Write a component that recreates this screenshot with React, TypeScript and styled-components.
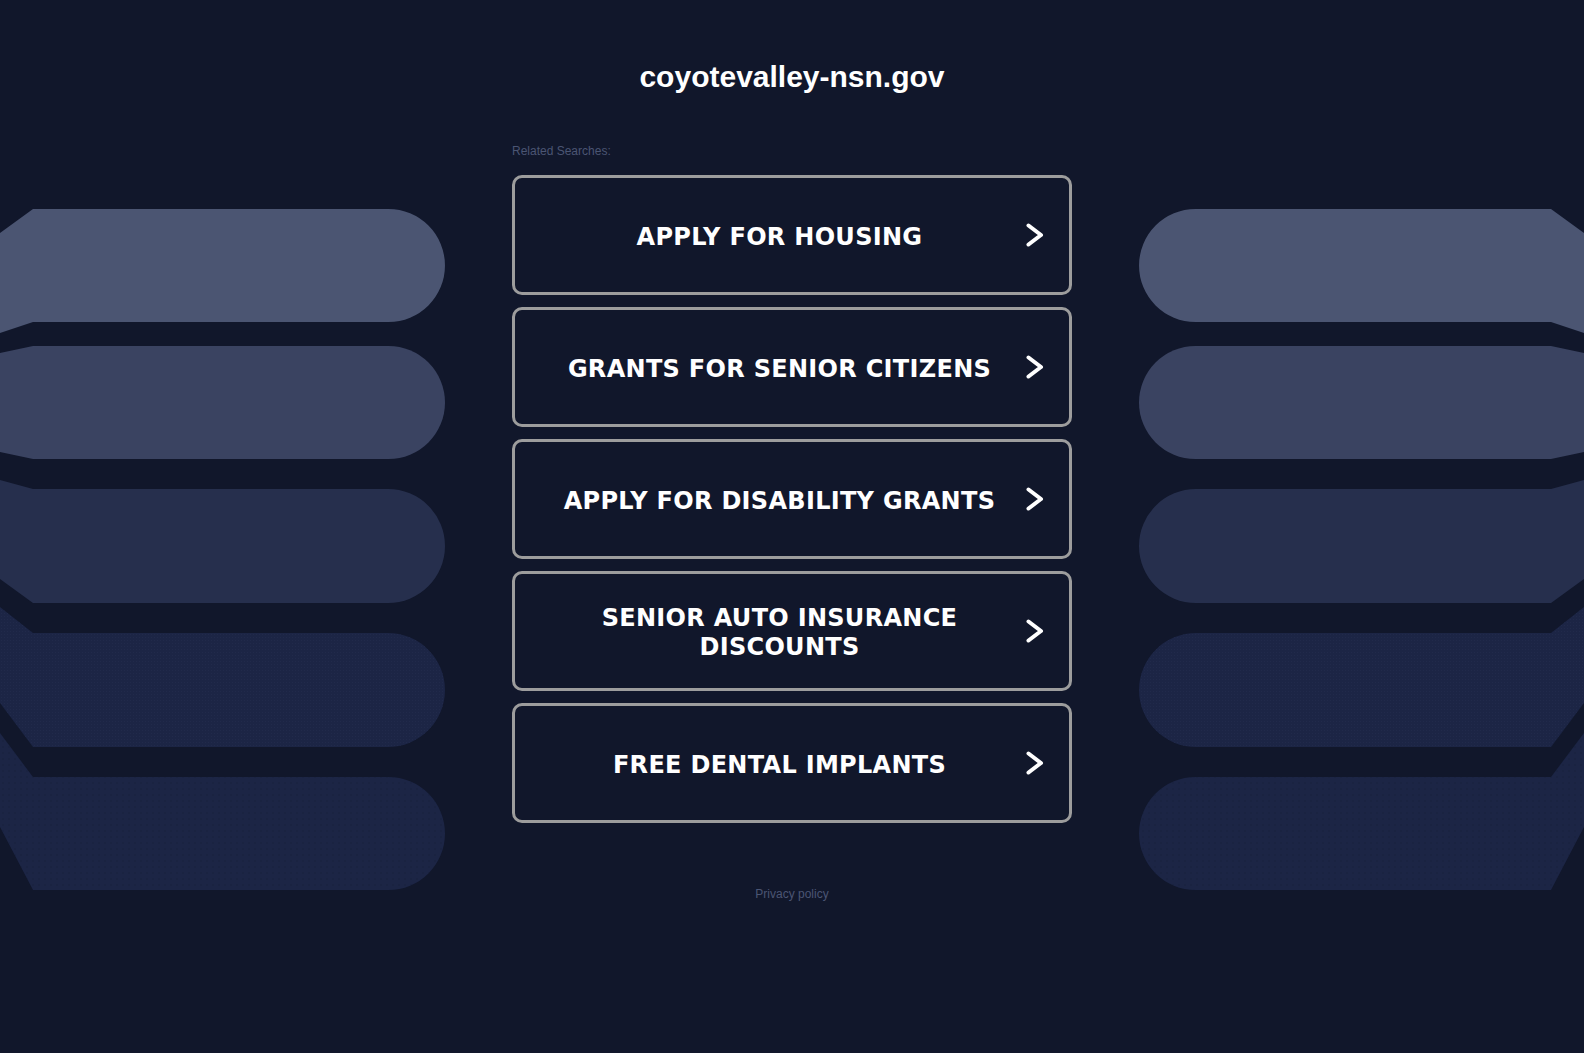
import styled, { createGlobalStyle } from "styled-components";

const searches = [
  "Apply for Housing",
  "Grants for Senior Citizens",
  "Apply for Disability Grants",
  "Senior Auto Insurance Discounts",
  "Free Dental Implants",
];

// side pills: top, bottom, y where the slant meets the page edge (top / bottom), fill
const pills = [
  { t: 209, b: 322, lt: 233, lb: 333, fill: "#4b5572" },
  { t: 346, b: 459, lt: 353, lb: 452, fill: "#3a4361" },
  { t: 489, b: 603, lt: 480, lb: 579, fill: "#262f4d" },
  { t: 633, b: 747, lt: 607, lb: 703, fill: "#1c2545", dots: "fine" },
  { t: 777, b: 890, lt: 733, lb: 827, fill: "#1c2545", dots: "wide" },
];

const GlobalStyle = createGlobalStyle`
  html, body {
    margin: 0;
    padding: 0;
    background-color: #11172b;
  }
`;

function pillPath(t: number, b: number, lt: number, lb: number) {
  const r = (b - t) / 2;
  const end = 445 - r;
  return `M0 ${lt} L33 ${t} H${end} A${r} ${r} 0 0 1 ${end} ${b} H33 L0 ${lb} Z`;
}

interface DecorProps {
  side: "left" | "right";
}
function Decor({ side }: DecorProps) {
  return (
    <SideColumn $side={side}>
      <svg width="445" height="900" viewBox="0 0 445 900">
        <defs>
          <pattern id={`fine-${side}`} width="3" height="3" patternUnits="userSpaceOnUse">
            <circle cx="1.5" cy="1.5" r="0.5" fill="#2a3558" opacity="0.45" />
          </pattern>
          <pattern id={`wide-${side}`} width="6" height="6" patternUnits="userSpaceOnUse">
            <circle cx="3" cy="3" r="0.7" fill="#111830" opacity="0.6" />
          </pattern>
        </defs>
        {pills.map((p, key) => (
          <g key={key}>
            <path d={pillPath(p.t, p.b, p.lt, p.lb)} fill={p.fill} />
            {p.dots && (
              <path d={pillPath(p.t, p.b, p.lt, p.lb)} fill={`url(#${p.dots}-${side})`} />
            )}
          </g>
        ))}
      </svg>
    </SideColumn>
  );
}

function Chevron() {
  return (
    <svg width="18" height="24" viewBox="0 0 18 24">
      <path
        d="M2.5 2.5 L15 12 L2.5 21.5"
        fill="none"
        stroke="#ffffff"
        strokeWidth="4"
        strokeLinecap="round"
        strokeLinejoin="round"
      />
    </svg>
  );
}

function App() {
  return (
    <>
      <GlobalStyle />
      <Page>
        <Decor side="left" />
        <Center>
          <Title>coyotevalley-nsn.gov</Title>
          <Label>Related Searches:</Label>
          <List>
            {searches.map((s) => (
              <SearchButton key={s} href="#">
                <span className="text">{s}</span>
                <Chevron />
              </SearchButton>
            ))}
          </List>
          <Footer href="#">Privacy policy</Footer>
        </Center>
        <Decor side="right" />
      </Page>
    </>
  );
}

const Page = styled.div`
  min-height: 100vh;
  display: grid;
  grid-template-columns: 1fr 560px 1fr;
  overflow: hidden;
`;

const SideColumn = styled.div<{ $side: "left" | "right" }>`
  display: flex;
  justify-content: ${(p) => (p.$side === "left" ? "flex-start" : "flex-end")};
  align-items: flex-start;

  & > svg {
    display: block;
    flex-shrink: 0;
    transform: ${(p) => (p.$side === "right" ? "scaleX(-1)" : "none")};
  }
`;

const Center = styled.div`
  display: flex;
  flex-direction: column;
  padding-top: 60px;
`;

const Title = styled.h1`
  margin: 0;
  font-family: "Liberation Sans", Arial, sans-serif;
  font-size: 30px;
  line-height: 34px;
  font-weight: bold;
  color: #ffffff;
  text-align: center;
`;

const Label = styled.div`
  margin-top: 50px;
  font-family: "Liberation Sans", Arial, sans-serif;
  font-size: 12px;
  line-height: 14px;
  color: #4b5573;
`;

const List = styled.div`
  margin-top: 17px;
  display: flex;
  flex-direction: column;
  gap: 12px;
`;

const SearchButton = styled.a`
  box-sizing: border-box;
  height: 120px;
  border: 3px solid #9d9d9d;
  border-radius: 10px;
  background-color: #11172b;

  display: flex;
  align-items: center;
  padding: 0 25px 0 18px;

  text-decoration: none;

  & > .text {
    flex: 1;
    padding-top: 4px;
    text-align: center;
    font-family: "DejaVu Sans", Verdana, sans-serif;
    font-weight: bold;
    font-size: 24px;
    line-height: 29px;
    letter-spacing: 0.3px;
    text-transform: uppercase;
    color: #ffffff;
  }

  & > svg {
    flex-shrink: 0;
  }
`;

const Footer = styled.a`
  margin-top: 64px;
  align-self: center;
  font-family: "Liberation Sans", Arial, sans-serif;
  font-size: 12px;
  line-height: 14px;
  color: #4b5573;
  text-decoration: none;
`;

export default App;
